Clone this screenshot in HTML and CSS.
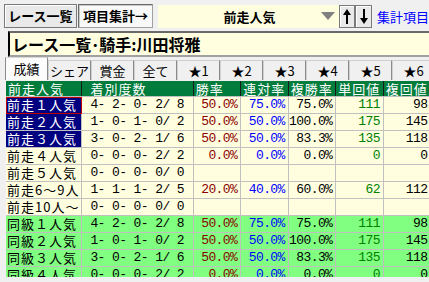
FILE: index.html
```html
<!DOCTYPE html>
<html lang="ja">
  <head>
    <meta charset="UTF-8" />
    <meta name="viewport" content="width=device-width, initial-scale=1.0" />
    <title>項目集計</title>
    <link rel="stylesheet" href="styles.css">
  </head>
  <body>
    <div class="toolbar">
      <button class="btn">レース一覧</button>
      <button class="btn pressed">項目集計→</button>
      <div class="combo">
        <span class="combo-text">前走人気</span>
        <svg class="caret" width="14" height="10" viewBox="0 0 14 10"><polygon points="0,1 14,1 7,9" fill="#808080" /></svg>
      </div>
      <button class="arrow">
        <svg width="10" height="17" viewBox="0 0 10 17"><polygon points="5,1 9,7 6,7 6,16 4,16 4,7 1,7" fill="#000" /></svg>
      </button>
      <button class="arrow">
        <svg width="10" height="17" viewBox="0 0 10 17"><polygon points="5,16 9,10 6,10 6,1 4,1 4,10 1,10" fill="#000" /></svg>
      </button>
      <span class="link">集計項目</span>
    </div>

    <div class="title">レース一覧･騎手:川田将雅</div>

    <div class="tabs">
      <span class="tab active">成績</span>
      <span class="tab">シェア</span>
      <span class="tab">賞金</span>
      <span class="tab">全て</span>
      <span class="tab">★1</span>
      <span class="tab">★2</span>
      <span class="tab">★3</span>
      <span class="tab">★4</span>
      <span class="tab">★5</span>
      <span class="tab">★6</span>
      <span class="tab"></span>
    </div>

    <div class="grid">
      <table>
        <colgroup>
          <col class="c-label" />
          <col class="c-count" />
          <col class="c-num" />
          <col class="c-num" />
          <col class="c-num" />
          <col class="c-num" />
          <col class="c-num" />
          <col class="c-num" />
        </colgroup>
        <tr>
          <th>前走人気</th>
          <th class="pad">着別度数</th>
          <th>勝率</th>
          <th>連対率</th>
          <th>複勝率</th>
          <th>単回値</th>
          <th>複回値</th>
          <th></th>
        </tr>
        <tr>
          <td class="label sel focus">前走１人気</td>
          <td class="count">4- 2- 0- 2/ 8</td>
          <td class="num win">50.0%</td>
          <td class="num ren">75.0%</td>
          <td class="num">75.0%</td>
          <td class="num tan">111</td>
          <td class="num">98</td>
          <td></td>
        </tr>
        <tr>
          <td class="label sel">前走２人気</td>
          <td class="count">1- 0- 1- 0/ 2</td>
          <td class="num win">50.0%</td>
          <td class="num ren">50.0%</td>
          <td class="num">100.0%</td>
          <td class="num tan">175</td>
          <td class="num">145</td>
          <td></td>
        </tr>
        <tr>
          <td class="label sel">前走３人気</td>
          <td class="count">3- 0- 2- 1/ 6</td>
          <td class="num win">50.0%</td>
          <td class="num ren">50.0%</td>
          <td class="num">83.3%</td>
          <td class="num tan">135</td>
          <td class="num">118</td>
          <td></td>
        </tr>
        <tr>
          <td class="label">前走４人気</td>
          <td class="count">0- 0- 0- 2/ 2</td>
          <td class="num win">0.0%</td>
          <td class="num ren">0.0%</td>
          <td class="num">0.0%</td>
          <td class="num tan">0</td>
          <td class="num">0</td>
          <td></td>
        </tr>
        <tr>
          <td class="label">前走５人気</td>
          <td class="count">0- 0- 0- 0/ 0</td>
          <td></td><td></td><td></td><td></td><td></td><td></td>
        </tr>
        <tr>
          <td class="label">前走6～9人</td>
          <td class="count">1- 1- 1- 2/ 5</td>
          <td class="num win">20.0%</td>
          <td class="num ren">40.0%</td>
          <td class="num">60.0%</td>
          <td class="num tan">62</td>
          <td class="num">112</td>
          <td></td>
        </tr>
        <tr>
          <td class="label">前走10人～</td>
          <td class="count">0- 0- 0- 0/ 0</td>
          <td></td><td></td><td></td><td></td><td></td><td></td>
        </tr>
        <tr class="same">
          <td class="label">同級１人気</td>
          <td class="count">4- 2- 0- 2/ 8</td>
          <td class="num win">50.0%</td>
          <td class="num ren">75.0%</td>
          <td class="num">75.0%</td>
          <td class="num tan">111</td>
          <td class="num">98</td>
          <td></td>
        </tr>
        <tr class="same">
          <td class="label">同級２人気</td>
          <td class="count">1- 0- 1- 0/ 2</td>
          <td class="num win">50.0%</td>
          <td class="num ren">50.0%</td>
          <td class="num">100.0%</td>
          <td class="num tan">175</td>
          <td class="num">145</td>
          <td></td>
        </tr>
        <tr class="same">
          <td class="label">同級３人気</td>
          <td class="count">3- 0- 2- 1/ 6</td>
          <td class="num win">50.0%</td>
          <td class="num ren">50.0%</td>
          <td class="num">83.3%</td>
          <td class="num tan">135</td>
          <td class="num">118</td>
          <td></td>
        </tr>
        <tr class="same">
          <td class="label">同級４人気</td>
          <td class="count">0- 0- 0- 2/ 2</td>
          <td class="num win">0.0%</td>
          <td class="num ren">0.0%</td>
          <td class="num">0.0%</td>
          <td class="num tan">0</td>
          <td class="num">0</td>
          <td></td>
        </tr>
      </table>
    </div>
  </body>
</html>
```

FILE: styles.css
```css
body,
html {
  margin: 0;
  width: 429px;
  height: 282px;
  overflow: hidden;
  background-color: #f0f0f0;
  font-family: "Noto Sans CJK JP", sans-serif;
}

.toolbar {
  display: flex;
  align-items: center;
  height: 24px;
  padding: 4px 0 3px 4px;
  white-space: nowrap;
}

.btn {
  height: 24px;
  width: 75px;
  padding: 0;
  margin-right: 1px;
  border: 1px solid #7a7a7a;
  box-shadow: inset 1px 1px #ffffff;
  background-color: #e9e9e9;
  font-family: "Noto Sans CJK JP", sans-serif;
  font-size: 13px;
  font-weight: bold;
  line-height: 20px;
  color: #000;
}

.btn.pressed {
  width: 78px;
  background-color: #f9f9f9;
  border-color: #6a6a6a #a0a0a0 #a0a0a0 #6a6a6a;
  box-shadow: inset 1px 1px #c8c8c8;
}

.combo {
  display: flex;
  align-items: center;
  width: 186px;
  height: 23px;
  margin-left: 4px;
  padding-left: 20px;
  box-sizing: border-box;
  background-color: #ffffe0;
}

.combo-text {
  flex: 1;
  text-align: center;
  font-size: 13px;
  font-weight: bold;
}

.caret {
  margin-right: 4px;
}

.arrow {
  display: flex;
  align-items: center;
  justify-content: center;
  width: 17px;
  height: 23px;
  padding: 0;
  border: 1px solid #7a7a7a;
  box-shadow: inset 1px 1px #ffffff;
  background-color: #e9e9e9;
}

.arrow:first-of-type {
  margin-left: 5px;
}

.link {
  margin-left: 5px;
  font-size: 13px;
  color: #0000ff;
}

.title {
  height: 22px;
  margin-left: 8px;
  padding-left: 2px;
  border-top: 2px solid #696969;
  border-left: 2px solid #000000;
  border-bottom: 2px solid #a0a0a0;
  background-color: #ffffe0;
  font-size: 16px;
  font-weight: bold;
  line-height: 22px;
  white-space: nowrap;
  overflow: hidden;
}

.tabs {
  display: flex;
  align-items: flex-end;
  height: 23px;
  padding-left: 5px;
  white-space: nowrap;
  overflow: hidden;
}

.tab {
  flex: none;
  width: 41px;
  height: 19px;
  border: 1px solid #d0d0d0;
  border-right-color: #8a8a8a;
  border-bottom: none;
  background-color: #f0f0f0;
  font-size: 13px;
  line-height: 19px;
  text-align: center;
}

.tab.active {
  height: 22px;
  background-color: #fcfcfc;
  border-color: #d8d8d8 #8a8a8a;
  line-height: 22px;
}

.grid {
  height: 196px;
  margin: 1px 0 0 6px;
  overflow: hidden;
}

.grid table {
  width: 473px;
  table-layout: fixed;
  border-collapse: collapse;
  background-color: #ffffe0;
  font-size: 13px;
}

.c-label {
  width: 75px;
}

.c-count {
  width: 110px;
}

.c-num {
  width: 47px;
}

.grid th {
  height: 15px;
  padding: 0 0 0 2px;
  background-color: #007d3c;
  color: #ffffff;
  font-weight: normal;
  text-align: left;
  letter-spacing: 1px;
  line-height: 15px;
  border-right: 1px solid #1a1a1a;
  border-bottom: 1px solid #c0c0c0;
  overflow: hidden;
  white-space: nowrap;
}

.grid th.pad {
  padding-left: 8px;
}

.grid td {
  height: 16px;
  padding: 0 3px 0 0;
  border-right: 1px solid #c0c0c0;
  border-bottom: 1px solid #c0c0c0;
  line-height: 16px;
  white-space: pre;
  overflow: hidden;
}

.grid .label {
  padding-left: 1px;
  letter-spacing: 1px;
}

.grid .sel {
  background-color: #000080;
  color: #ffffff;
}

.grid .focus {
  outline: 1px solid #c00000;
  outline-offset: -1px;
}

.grid .count {
  padding-left: 8px;
  font-family: "Liberation Mono", "Noto Sans CJK JP", monospace;
  font-size: 13px;
  letter-spacing: -0.6px;
}

.grid .num {
  text-align: right;
  font-family: "Liberation Mono", "Noto Sans CJK JP", monospace;
  font-size: 13px;
  letter-spacing: -0.6px;
}

.grid .win {
  color: #8b0000;
}

.grid .ren {
  color: #0000ff;
}

.grid .tan {
  color: #008000;
}

.grid .same td {
  background-color: #80ff80;
}
```
